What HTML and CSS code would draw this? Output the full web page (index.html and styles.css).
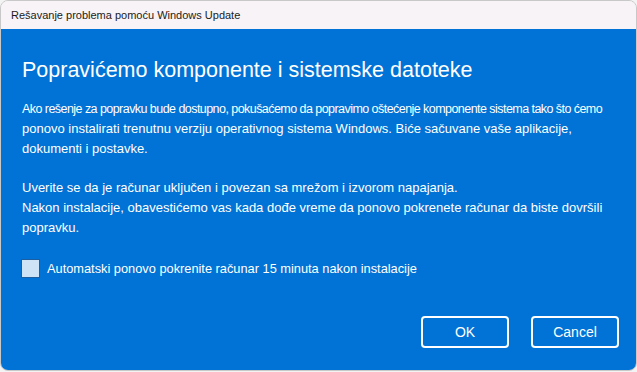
FILE: index.html
```html
<!DOCTYPE html>
<html lang="sr-Latn">
<head>
    <meta charset="UTF-8">
    <meta name="viewport" content="width=device-width, initial-scale=1.0">
    <title>Rešavanje problema pomoću Windows Update</title>
    <link rel="stylesheet" href="styles.css">
</head>
<body>
    <div class="window">
        <div class="titlebar">Rešavanje problema pomoću Windows Update</div>
        <div class="content">
            <h1 class="heading">Popravićemo komponente i sistemske datoteke</h1>
            <p class="text"><span class="tight">Ako rešenje za popravku bude dostupno, pokušaćemo da popravimo oštećenje komponente sistema tako što ćemo</span><br>ponovo instalirati trenutnu verziju operativnog sistema Windows. Biće sačuvane vaše aplikacije,<br>dokumenti i postavke.</p>
            <p class="text">Uverite se da je računar uključen i povezan sa mrežom i izvorom napajanja.<br>Nakon instalacije, obavestićemo vas kada dođe vreme da ponovo pokrenete računar da biste dovršili<br>popravku.</p>
            <label class="check">
                <span class="box"></span>
                Automatski ponovo pokrenite računar 15 minuta nakon instalacije
            </label>
            <div class="actions">
                <button class="btn">OK</button>
                <button class="btn">Cancel</button>
            </div>
        </div>
    </div>
</body>
</html>
```

FILE: styles.css
```css
body {
    margin: 0;
    background: #f3f3f3;
    font-family: "Liberation Sans", Arial, sans-serif;
}
.window {
    width: 635px;
    height: 369px;
    border: 1px solid #c8c8c8;
    border-radius: 8px;
    overflow: hidden;
    display: flex;
    flex-direction: column;
}
.titlebar {
    height: 28px;
    background: #f7f3f7;
    color: #1b1b1b;
    font-size: 11px;
    padding-left: 10px;
    display: flex;
    align-items: center;
}
.content {
    flex: 1;
    background: #0173d6;
    color: #fff;
    padding: 26px 17px 22px 20px;
    display: flex;
    flex-direction: column;
}
.heading {
    margin: 0 0 14px 1px;
    font-size: 21.5px;
    font-weight: normal;
    line-height: 30px;
}
.text {
    margin: 0 0 19px 1px;
    font-size: 13px;
    line-height: 20px;
    white-space: nowrap;
}
.tight {
    font-size: 12.5px;
    letter-spacing: -0.55px;
}
.check {
    display: flex;
    align-items: center;
    gap: 7px;
    font-size: 12.8px;
    margin-top: 2px;
}
.box {
    width: 17px;
    height: 17px;
    background: #cfe3f7;
    border: 1px solid #1d5e9e;
}
.actions {
    margin-top: auto;
    display: flex;
    justify-content: flex-end;
    gap: 22px;
}
.btn {
    width: 88px;
    height: 32px;
    background: #0173d6;
    color: #fff;
    border: 2px solid #fff;
    border-radius: 4px;
    font-family: "Liberation Sans", Arial, sans-serif;
    font-size: 14px;
    cursor: pointer;
}
```
